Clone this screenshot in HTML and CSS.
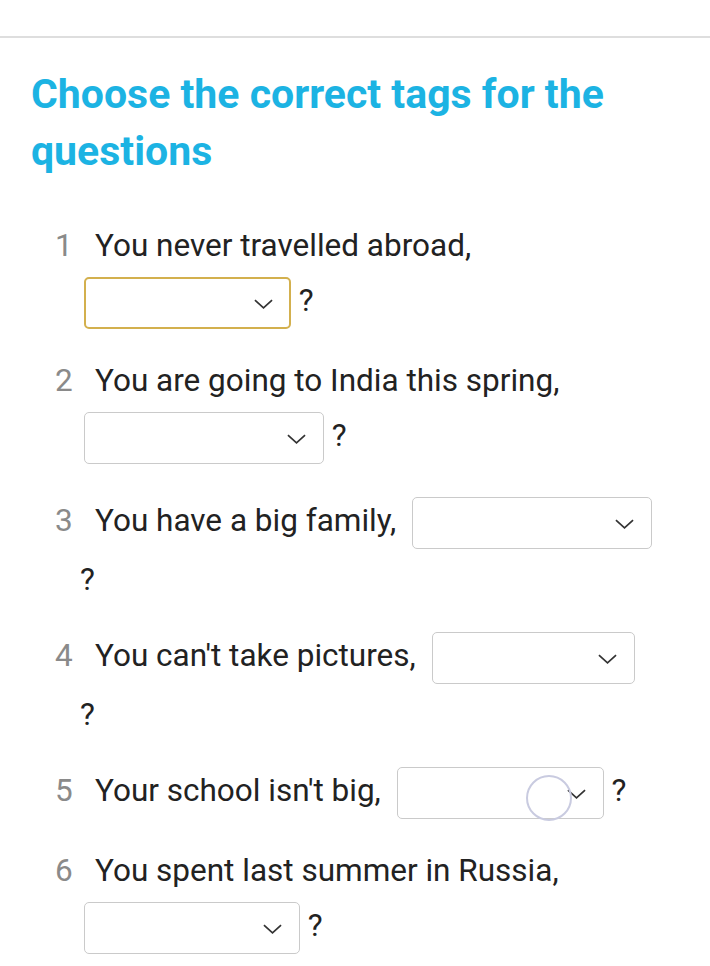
FILE: index.html
```html
<!DOCTYPE html>
<html lang="en">
<head>
    <meta charset="UTF-8">
    <meta name="viewport" content="width=device-width, initial-scale=1.0">
    <title>Question tags</title>
    <link rel="stylesheet" href="styles.css">
</head>
<body>
    <div class="task">
        <h1>Choose the correct tags for the questions</h1>

        <ol class="questions">
            <li><span class="num">1</span>You never travelled abroad, <span class="pick w1"><select class="focused"><option></option></select><svg viewBox="0 0 20 10"><path d="M1 1 L10 9 L19 1"/></svg></span> ?</li>
            <li><span class="num">2</span>You are going to India this spring, <span class="pick w2"><select><option></option></select><svg viewBox="0 0 20 10"><path d="M1 1 L10 9 L19 1"/></svg></span> ?</li>
            <li><span class="num">3</span>You have a big family, <span class="pick w3"><select><option></option></select><svg viewBox="0 0 20 10"><path d="M1 1 L10 9 L19 1"/></svg></span> ?</li>
            <li><span class="num">4</span>You can't take pictures, <span class="pick w4"><select><option></option></select><svg viewBox="0 0 20 10"><path d="M1 1 L10 9 L19 1"/></svg></span> ?</li>
            <li><span class="num">5</span>Your school isn't big, <span class="pick w5"><select><option></option></select><svg viewBox="0 0 20 10"><path d="M1 1 L10 9 L19 1"/></svg><span class="touch"></span></span> ?</li>
            <li><span class="num">6</span>You spent last summer in Russia, <span class="pick w6"><select><option></option></select><svg viewBox="0 0 20 10"><path d="M1 1 L10 9 L19 1"/></svg></span> ?</li>
        </ol>
    </div>
</body>
</html>
```

FILE: styles.css
```css
body {
    font-family: Roboto, "Liberation Sans", sans-serif;
    margin: 0;
    padding: 0;
    background: #fff;
    color: #222;
}

.task {
    margin-top: 36px;
    border-top: 2px solid #dedede;
    padding: 28px 55px 0 31px;
}

h1 {
    margin: 0;
    font-size: 41px;
    line-height: 57px;
    font-weight: 700;
    color: #1cb3e3;
}

.questions {
    list-style: none;
    margin: 41px 0 0;
    padding: 0 0 0 49px;
}

.questions li {
    font-size: 31.5px;
    line-height: 50px;
    margin-bottom: 21px;
}

.num {
    display: inline-block;
    width: 40px;
    margin-left: -25px;
    color: #8a8a8a;
}

.pick {
    position: relative;
    display: inline-block;
    vertical-align: middle;
    margin: 6px 0 6px 4px;
    height: 52px;
}

.questions li:nth-child(3) .pick,
.questions li:nth-child(4) .pick,
.questions li:nth-child(5) .pick {
    margin-left: 8px;
}

.pick select {
    appearance: none;
    -webkit-appearance: none;
    width: 100%;
    height: 52px;
    border: 1px solid #cacaca;
    border-radius: 5px;
    background: #fff;
    display: block;
}

.pick select.focused {
    border: 2px solid #d3b04e;
}

.pick svg {
    position: absolute;
    right: 18px;
    top: 22px;
    width: 19px;
    height: 10px;
    fill: none;
    stroke: #333;
    stroke-width: 1.8;
}

.w1 { width: 207px; }
.w2 { width: 240px; }
.w3 { width: 240px; }
.w4 { width: 203px; }
.w5 { width: 207px; }
.w6 { width: 216px; }

.touch {
    position: absolute;
    left: 129px;
    top: 8px;
    width: 42px;
    height: 42px;
    border: 2px solid #c9cbe0;
    border-radius: 50%;
}
```
